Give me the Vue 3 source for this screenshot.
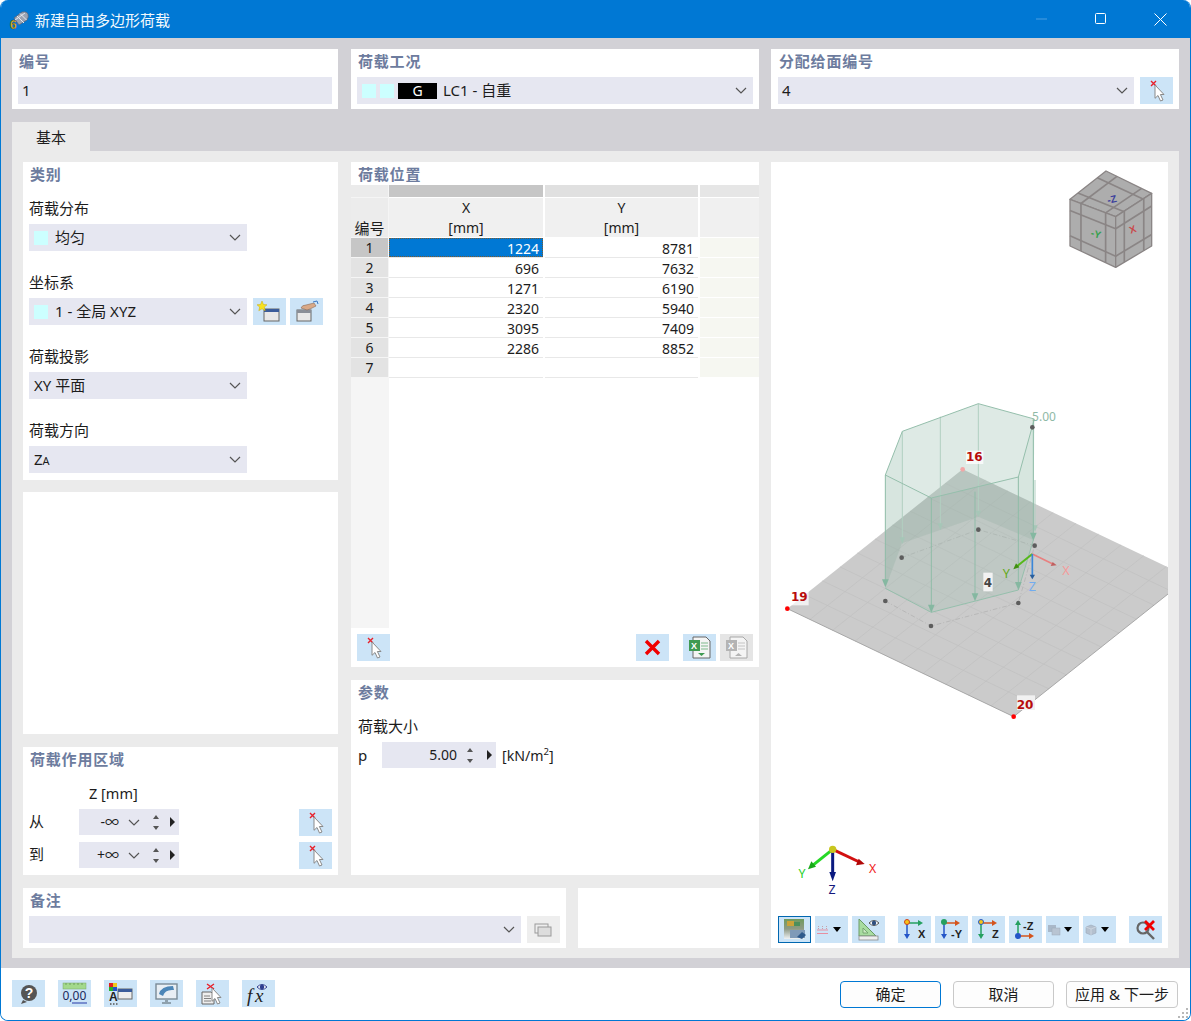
<script setup>
const rows = [
  { no: 1, x: 1224, y: 8781 },
  { no: 2, x: 696, y: 7632 },
  { no: 3, x: 1271, y: 6190 },
  { no: 4, x: 2320, y: 5940 },
  { no: 5, x: 3095, y: 7409 },
  { no: 6, x: 2286, y: 8852 },
  { no: 7, x: '', y: '' }
]

const mix = (a, b, t) => [a[0] + (b[0] - a[0]) * t, a[1] + (b[1] - a[1]) * t]

// grid lines of a quad a-b-c-d, at the given fractions
function quadLines(a, b, c, d, steps) {
  const out = []
  for (const t of steps) {
    out.push([mix(a, b, t), mix(d, c, t)])
    out.push([mix(a, d, t), mix(b, c, t)])
  }
  return out
}

const tenths = [0.1, 0.2, 0.3, 0.4, 0.5, 0.6, 0.7, 0.8, 0.9]
const plateLines = quadLines([578, 268], [52, 686], [731, 1010], [1257, 592], tenths)

const cubeFaces = [
  [[168, 33], [305, 100], [197, 170], [60, 118]],
  [[60, 118], [197, 170], [197, 322], [60, 258]],
  [[197, 170], [305, 100], [305, 258], [197, 322]]
]
const cubeLines = cubeFaces.flatMap((f) => quadLines(f[0], f[1], f[2], f[3], [0.24, 0.78]))
const pts = (f) => f.map((p) => p.join(',')).join(' ')

// load arrows: x, top y, tip y
const rearArrows = [
  [625, 71, 412],
  [397, 154, 492],
  [511, 110, 450],
  [795, 300, 456]
]
const frontArrows = [
  [346, 285, 622],
  [484, 354, 698],
  [745, 291, 630],
  [790, 117, 482],
  [615, 335, 664]
]
const nodes = [[395, 533], [625, 449], [794, 497], [745, 669], [483, 738], [346, 663], [787, 142]]
</script>

<template>
  <div class="window">
    <svg class="defs" width="0" height="0">
      <defs>
        <symbol id="chev" viewBox="0 0 12 7">
          <polyline points="1,1 6,6 11,1" fill="none" stroke="#555" stroke-width="1.2" />
        </symbol>
        <symbol id="pick" viewBox="0 0 33 27">
          <path d="M11 4l5 5M16 4l-5 5" stroke="#e8202a" stroke-width="1.4" />
          <path d="M15 8l9 9.500h-3.600l2.600 5.500-2.500 1-2.500-5.500-3 2.800z" fill="#fff" stroke="#8a8a8a" stroke-width="1" />
        </symbol>
        <linearGradient id="fade" x1="0" y1="0" x2="0" y2="1">
          <stop offset="0" stop-color="#6f9a5c" />
          <stop offset=".5" stop-color="#8f9a86" />
          <stop offset="1" stop-color="#eef2f5" />
        </linearGradient>
      </defs>
    </svg>

    <header class="titlebar">
      <svg class="app-icon" width="22" height="22" viewBox="0 0 22 22">
        <path d="M6 9L14 3q5-1 6 2t-1 6l-8 5z" fill="#9aa3b3" stroke="#5b6272" stroke-width=".7" />
        <path d="M9 7l7 7M12 4.500l6.500 6.500M7 11l10-7" stroke="#e6e8ee" stroke-width="1" />
        <text x="2" y="20" class="six">6</text>
      </svg>
      <span class="title">新建自由多边形荷载</span>
      <div class="win-btns">
        <svg width="12" height="12" viewBox="0 0 12 12" class="win-min"><path d="M0 6h11" stroke="#4d9ee0" /></svg>
        <svg width="12" height="12" viewBox="0 0 12 12"><rect x=".5" y=".5" width="10" height="10" rx="1" fill="none" stroke="#fff" /></svg>
        <svg width="13" height="13" viewBox="0 0 13 13"><path d="M.5.500l12 12M12.500.500l-12 12" stroke="#fff" /></svg>
      </div>
    </header>

    <div class="body">
      <div class="top-row">
        <section class="panel top-no">
          <h3>编号</h3>
          <div class="field">1</div>
        </section>
        <section class="panel top-lc">
          <h3>荷载工况</h3>
          <div class="field">
            <i class="swatch"></i><i class="swatch second"></i><b class="lc-tag">G</b>
            <span>LC1 - 自重</span>
            <svg class="chev"><use href="#chev" /></svg>
          </div>
        </section>
        <section class="panel top-face">
          <h3>分配给面编号</h3>
          <div class="inline">
            <div class="field grow">4<svg class="chev"><use href="#chev" /></svg></div>
            <button class="ib"><svg width="33" height="27"><use href="#pick" /></svg></button>
          </div>
        </section>
      </div>

      <div class="tabs"><div class="tab">基本</div></div>

      <div class="page">
        <div class="page-left">
          <div class="page-cols">
            <div class="col-a">
              <section class="panel cat">
                <h3>类别</h3>
                <div class="group">
                  <label>荷载分布</label>
                  <div class="field w218"><i class="swatch"></i><span class="after-swatch">均匀</span><svg class="chev"><use href="#chev" /></svg></div>
                </div>
                <div class="group">
                  <label>坐标系</label>
                  <div class="inline coord">
                    <div class="field w218"><i class="swatch"></i><span class="after-swatch">1 - 全局 XYZ</span><svg class="chev"><use href="#chev" /></svg></div>
                    <button class="ib first">
                      <svg width="33" height="27" viewBox="0 0 33 27">
                        <rect x="11" y="11" width="15" height="12" fill="#e8e8e8" stroke="#666" />
                        <rect x="11" y="11" width="15" height="3" fill="#3b5c9a" />
                        <path d="M9 3l1.500 3.500 3.500.300-2.700 2.300.900 3.600L9 10.800l-3.200 1.900.900-3.600L4 6.800l3.500-.300z" fill="#f7e21e" stroke="#c9a90a" stroke-width=".5" />
                      </svg>
                    </button>
                    <button class="ib">
                      <svg width="33" height="27" viewBox="0 0 33 27">
                        <rect x="7" y="12" width="14" height="11" fill="#e8e8e8" stroke="#666" />
                        <rect x="7" y="12" width="14" height="3" fill="#8a8f98" />
                        <path d="M11 10q1-3 5-3l8-2 2 3-6 3-3 1z" fill="#d9a987" stroke="#8a6a55" stroke-width=".6" />
                        <path d="M23 4l4-1 1 3" fill="none" stroke="#3b78c4" />
                      </svg>
                    </button>
                  </div>
                </div>
                <div class="group">
                  <label>荷载投影</label>
                  <div class="field w218">XY 平面<svg class="chev"><use href="#chev" /></svg></div>
                </div>
                <div class="group">
                  <label>荷载方向</label>
                  <div class="field w218"><span>Z<small>A</small></span><svg class="chev"><use href="#chev" /></svg></div>
                </div>
              </section>

              <section class="panel empty"></section>

              <section class="panel region">
                <h3>荷载作用区域</h3>
                <div class="z-head">Z [mm]</div>
                <div class="z-row">
                  <span class="z-label">从</span>
                  <div class="spin z-spin">
                    <span class="z-val">-∞</span>
                    <svg class="z-chev"><use href="#chev" /></svg>
                    <span class="updown"><i class="up"></i><i class="down"></i></span>
                    <i class="next"></i>
                  </div>
                  <button class="ib push"><svg width="33" height="27"><use href="#pick" /></svg></button>
                </div>
                <div class="z-row">
                  <span class="z-label">到</span>
                  <div class="spin z-spin">
                    <span class="z-val">+∞</span>
                    <svg class="z-chev"><use href="#chev" /></svg>
                    <span class="updown"><i class="up"></i><i class="down"></i></span>
                    <i class="next"></i>
                  </div>
                  <button class="ib push"><svg width="33" height="27"><use href="#pick" /></svg></button>
                </div>
              </section>
            </div>

            <div class="col-b">
              <section class="panel pos">
                <h3 class="pos-head">荷载位置</h3>
                <div class="grid-area">
                  <div class="grid-row band">
                    <div class="c0"></div><div class="b1"></div><div class="b2"></div><div class="b3"></div>
                  </div>
                  <div class="grid-row head">
                    <div class="c0">编号</div>
                    <div>X<br />[mm]</div>
                    <div>Y<br />[mm]</div>
                    <div></div>
                  </div>
                  <div v-for="r in rows" :key="r.no" class="grid-row data">
                    <div class="c0" :class="{ cur: r.no === 1 }">{{ r.no }}</div>
                    <div class="num" :class="{ sel: r.no === 1 }">{{ r.x }}</div>
                    <div class="num">{{ r.y }}</div>
                    <div class="extra"></div>
                  </div>
                </div>
                <div class="grid-tools">
                  <button class="ib"><svg width="33" height="27"><use href="#pick" /></svg></button>
                  <button class="ib push">
                    <svg width="33" height="27" viewBox="0 0 33 27"><path d="M10 7l13 13M23 7L10 20" stroke="#f00000" stroke-width="3.400" /></svg>
                  </button>
                  <button class="ib gap14">
                    <svg width="33" height="27" viewBox="0 0 33 27">
                      <path d="M10 3h13l4 4v17H10z" fill="#f4f4f4" stroke="#666" />
                      <rect x="6" y="6" width="11" height="11" fill="#3f9a52" />
                      <text x="8" y="15" class="xl">X</text>
                      <path d="M18 9h7M18 12h7M18 15h7" stroke="#7fb98c" />
                      <path d="M15 19h7l-3.500 3z" fill="#3f9a52" />
                    </svg>
                  </button>
                  <button class="ib off">
                    <svg width="33" height="27" viewBox="0 0 33 27">
                      <path d="M10 3h13l4 4v17H10z" fill="#f4f4f4" stroke="#a8a8a8" />
                      <rect x="6" y="6" width="11" height="11" fill="#b4b4b4" />
                      <text x="8" y="15" class="xl">X</text>
                      <path d="M18 9h7M18 12h7M18 15h7" stroke="#c4c4c4" />
                      <path d="M15 22h7l-3.500-3z" fill="#b4b4b4" />
                    </svg>
                  </button>
                </div>
              </section>

              <section class="panel params">
                <h3>参数</h3>
                <label class="p-label">荷载大小</label>
                <div class="p-row">
                  <span class="p-name">p</span>
                  <div class="spin p-spin">
                    <span class="p-val">5.00</span>
                    <span class="updown"><i class="up"></i><i class="down"></i></span>
                    <i class="next"></i>
                  </div>
                  <span class="p-unit">[kN/m<sup>2</sup>]</span>
                </div>
              </section>
            </div>
          </div>

          <div class="notes-row">
            <section class="panel notes">
              <h3>备注</h3>
              <div class="inline">
                <div class="field grow"><svg class="chev"><use href="#chev" /></svg></div>
                <button class="ib soft">
                  <svg width="33" height="27" viewBox="0 0 33 27">
                    <rect x="8" y="8" width="13" height="9" fill="#eee" stroke="#9a9a9a" />
                    <rect x="11" y="11" width="13" height="9" fill="#ddd" stroke="#9a9a9a" />
                  </svg>
                </button>
              </div>
            </section>
            <section class="panel notes-side"></section>
          </div>
        </div>

        <section class="panel view">
          <svg class="scene" width="397" height="786" viewBox="3 -654 1191 2358">
            <!-- plate -->
            <polygon points="578,268 52,686 731,1010 1257,592" fill="#cbcbcb" />
            <line v-for="(l, i) in plateLines" :key="i" :x1="l[0][0]" :y1="l[0][1]" :x2="l[1][0]" :y2="l[1][1]" stroke="#c0c0c0" stroke-width="2" />
            <path d="M52 686L731 1010L1257 592" fill="none" stroke="#9c9c9c" stroke-width="2.500" />
            <path d="M346 663L483 738L745 669L794 497M395 533L625 449L794 497" fill="none" stroke="#adadad" stroke-width="2" stroke-dasharray="14 6 3 6" />

            <!-- load body -->
            <polygon points="397,154 625,71 793,117 745,291 484,354 346,285" fill="#c5dcd2" fill-opacity=".38" />
            <polygon points="346,285 397,154 397,490 346,625" fill="#9cc0b0" fill-opacity=".2" />
            <polygon points="397,154 625,71 625,410 397,490" fill="#9cc0b0" fill-opacity=".14" />
            <polygon points="625,71 793,117 790,480 625,410" fill="#9cc0b0" fill-opacity=".14" />
            <polygon points="346,625 346,452 578,268 790,369 790,480 625,410 395,490" fill="#6e8278" fill-opacity=".11" />
            <polygon points="346,285 484,354 484,697 346,625" fill="#9cc0b0" fill-opacity=".25" />
            <polygon points="484,354 745,291 745,630 484,697" fill="#9cc0b0" fill-opacity=".25" />
            <polygon points="745,291 793,117 790,480 745,630" fill="#9cc0b0" fill-opacity=".3" />
            <g v-for="(a, i) in rearArrows" :key="'r' + i">
              <line :x1="a[0]" :y1="a[1]" :x2="a[0]" :y2="a[2] - 18" stroke="#b1cfc1" stroke-width="3" />
              <polygon :points="`${a[0] - 8},${a[2] - 20} ${a[0] + 8},${a[2] - 20} ${a[0]},${a[2]}`" fill="#a6c6b7" />
            </g>
            <g stroke="#95bfac" stroke-width="3" fill="none">
              <polygon points="397,154 625,71 793,117 745,291 484,354 346,285" />
              <polyline points="346,625 484,697 745,630 790,480" />
            </g>
            <g v-for="(a, i) in frontArrows" :key="'f' + i">
              <line :x1="a[0]" :y1="a[1]" :x2="a[0]" :y2="a[2] - 18" stroke="#8fbca8" stroke-width="3" />
              <polygon :points="`${a[0] - 10},${a[2] - 24} ${a[0] + 10},${a[2] - 24} ${a[0]},${a[2]}`" fill="#85b8a1" />
            </g>

            <circle v-for="(n, i) in nodes" :key="'n' + i" :cx="n[0]" :cy="n[1]" r="7" fill="#5d5d5d" />
            <circle cx="578" cy="268" r="7" fill="#f3a6a6" />
            <circle cx="52" cy="686" r="7" fill="#f00" />
            <circle cx="731" cy="1010" r="7" fill="#f00" />

            <!-- local axes -->
            <path d="M787 522L850 553" stroke="#e88080" stroke-width="5" />
            <polygon points="860,556 842,558 848,546" fill="#c06060" />
            <path d="M787 522L742 558" stroke="#55b81a" stroke-width="6" />
            <polygon points="730,568 748,562 738,550" fill="#3f8f10" />
            <path d="M787 522V586" stroke="#3a86d8" stroke-width="5" />
            <polygon points="787,598 779,584 795,584" fill="#2a5f9c" />
            <text x="888" y="584" class="t-axis" fill="#f59a9a">X</text>
            <text x="709" y="594" class="t-axis" fill="#62a81a">Y</text>
            <text x="787" y="634" class="t-axis" fill="#72acf0">Z</text>

            <text x="822" y="123" class="t-val" fill="#8fb9a6">5.00</text>
            <rect x="588" y="212" width="52" height="40" fill="#fff" fill-opacity=".75" />
            <text x="613" y="244" class="t-no" fill="#b80c0c">16</text>
            <rect x="64" y="634" width="52" height="42" fill="#fff" fill-opacity=".7" />
            <text x="88" y="664" class="t-no" fill="#b80c0c">19</text>
            <rect x="741" y="946" width="54" height="44" fill="#f1f1f1" />
            <text x="765" y="987" class="t-no" fill="#b80c0c">20</text>
            <rect x="640" y="578" width="28" height="56" fill="#f2f2f2" />
            <text x="654" y="622" class="t-no" fill="#444">4</text>

            <!-- orientation cube -->
            <g transform="translate(840 -660)">
              <polygon v-for="(f, i) in cubeFaces" :key="'f' + i" :points="pts(f)" fill="#adadad" stroke="#8a8585" stroke-width="4" stroke-linejoin="round" />
              <line v-for="(l, i) in cubeLines" :key="'c' + i" :x1="l[0][0]" :y1="l[0][1]" :x2="l[1][0]" :y2="l[1][1]" stroke="#8a8585" stroke-width="5" />
              <text x="188" y="128" class="t-cube" fill="#3c3f9c" transform="rotate(-12 188 128)">-Z</text>
              <text x="135" y="232" class="t-cube" fill="#35a04d" transform="rotate(14 135 232)">-Y</text>
              <text x="252" y="218" class="t-cube" fill="#c9474a" transform="rotate(-20 252 218)">X</text>
            </g>

            <!-- global axes -->
            <path d="M188 1408L268 1446" stroke="#d21010" stroke-width="9" />
            <polygon points="284,1452 258,1456 266,1436" fill="#b00808" />
            <path d="M188 1408L128 1456" stroke="#26d826" stroke-width="9" />
            <polygon points="114,1468 124,1444 138,1460" fill="#18a818" />
            <path d="M188 1408V1478" stroke="#0a1a80" stroke-width="9" />
            <polygon points="188,1504 178,1476 198,1476" fill="#0a1a80" />
            <circle cx="188" cy="1408" r="11" fill="#c8c61e" />
            <text x="308" y="1478" class="t-big" fill="#f02020">X</text>
            <text x="96" y="1495" class="t-big" fill="#28d028">Y</text>
            <text x="186" y="1542" class="t-big" fill="#14187c">Z</text>
          </svg>

          <div class="view-tools">
            <button class="ib active">
              <svg width="31" height="25" viewBox="0 0 31 25">
                <rect x="5" y="2" width="20" height="20" fill="url(#fade)" />
                <rect x="8" y="4" width="7" height="5" fill="#c9a23a" />
                <rect x="15" y="5" width="6" height="4" fill="#4c8f5c" />
                <rect x="11" y="13" width="15" height="8" fill="#7f9ab8" />
                <path d="M18 20l5-5 4 3-4 4z" fill="#2f5a8c" />
              </svg>
            </button>
            <button class="ib drop">
              <svg width="20" height="27" viewBox="0 0 20 27">
                <path d="M2 14h11M2 17.500h11" stroke="#e78fa0" />
                <path d="M3.500 10v3M7.500 10v3M11.500 10v3" stroke="#c6a0a8" stroke-dasharray="1 1" />
              </svg>
              <i class="tri"></i>
            </button>
            <button class="ib">
              <svg width="33" height="27" viewBox="0 0 33 27">
                <path d="M7 3v17h17z" fill="#a8dca0" stroke="#6a9a66" />
                <path d="M11 12v5h5z" fill="#cbe9c4" stroke="#6a9a66" stroke-width=".8" />
                <rect x="7" y="20" width="19" height="4" fill="#eee" stroke="#8a8a8a" stroke-width=".8" />
                <path d="M17 7q5-5 10 0q-5 5-10 0z" fill="#fff" stroke="#555" />
                <circle cx="22" cy="7" r="2.200" fill="#2f4f7f" />
              </svg>
            </button>
            <button class="ib gap9">
              <svg width="33" height="27" viewBox="0 0 33 27">
                <path d="M9 7h14" stroke="#25a060" stroke-width="1.500" /><path d="M20 4l5 3-5 3z" fill="#25a060" />
                <path d="M9 7v13" stroke="#2456c8" stroke-width="1.500" /><path d="M6 18l3 5 3-5z" fill="#2456c8" />
                <circle cx="9" cy="6" r="2.500" fill="#f5c518" stroke="#d0401c" />
                <text x="20" y="22" class="t-ax">X</text>
              </svg>
            </button>
            <button class="ib">
              <svg width="33" height="27" viewBox="0 0 33 27">
                <path d="M9 7h14" stroke="#d4541c" stroke-width="1.500" /><path d="M20 4l5 3-5 3z" fill="#d4541c" />
                <path d="M9 7v13" stroke="#2456c8" stroke-width="1.500" /><path d="M6 18l3 5 3-5z" fill="#2456c8" />
                <circle cx="9" cy="6" r="3" fill="#25a060" />
                <text x="16" y="22" class="t-ax">-Y</text>
              </svg>
            </button>
            <button class="ib">
              <svg width="33" height="27" viewBox="0 0 33 27">
                <path d="M9 7h14" stroke="#d4541c" stroke-width="1.500" /><path d="M20 4l5 3-5 3z" fill="#d4541c" />
                <path d="M9 7v13" stroke="#25a060" stroke-width="1.500" /><path d="M6 18l3 5 3-5z" fill="#25a060" />
                <circle cx="9" cy="6" r="2.500" fill="#f5c518" stroke="#2456c8" />
                <text x="20" y="22" class="t-ax">Z</text>
              </svg>
            </button>
            <button class="ib">
              <svg width="33" height="27" viewBox="0 0 33 27">
                <path d="M9 20h14" stroke="#d4541c" stroke-width="1.500" /><path d="M20 17l5 3-5 3z" fill="#d4541c" />
                <path d="M9 20V8" stroke="#25a060" stroke-width="1.500" /><path d="M6 9l3-5 3 5z" fill="#25a060" />
                <circle cx="9" cy="20" r="3" fill="#2456c8" />
                <text x="14" y="14" class="t-ax">-Z</text>
              </svg>
            </button>
            <button class="ib drop">
              <svg width="20" height="27" viewBox="0 0 20 27">
                <rect x="2" y="9" width="8" height="7" fill="#a9b8c9" />
                <rect x="6" y="12" width="8" height="7" fill="#b8c4d2" stroke="#9aa8b8" stroke-width=".5" />
              </svg>
              <i class="tri"></i>
            </button>
            <button class="ib drop">
              <svg width="20" height="27" viewBox="0 0 20 27">
                <path d="M3 11l5-2 5 2v6l-5 2-5-2z" fill="#b4c0ce" stroke="#9aa8b8" stroke-width=".6" />
                <path d="M3 11l5 2 5-2M8 13v6" stroke="#d5dde6" stroke-width=".7" fill="none" />
              </svg>
              <i class="tri"></i>
            </button>
            <button class="ib gap9">
              <svg width="33" height="27" viewBox="0 0 33 27">
                <circle cx="14" cy="12" r="5.500" fill="none" stroke="#666" stroke-width="2.200" />
                <path d="M18 16l7 7" stroke="#666" stroke-width="2.400" />
                <path d="M16 5l9 9M25 5l-9 9" stroke="#f00000" stroke-width="2.800" />
              </svg>
            </button>
          </div>
        </section>
      </div>
    </div>

    <footer class="footer">
      <button class="ib">
        <svg width="33" height="27" viewBox="0 0 33 27">
          <path d="M11 20l-2 4 6-2z" fill="#555" />
          <circle cx="17" cy="13" r="8" fill="#555" />
          <text x="17" y="18" class="t-q">?</text>
        </svg>
      </button>
      <button class="ib">
        <svg width="33" height="27" viewBox="0 0 33 27">
          <rect x="5" y="3" width="23" height="6" fill="#a3d98c" stroke="#7aa868" stroke-width=".5" />
          <path d="M8 3v2M12 3v2M16 3v2M20 3v2M24 3v2" stroke="#5d8a4c" stroke-width=".7" />
          <text x="4.500" y="20" class="t-num">0,00</text>
          <path d="M14 23h15" stroke="#2438a8" stroke-width="1.200" />
        </svg>
      </button>
      <button class="ib">
        <svg width="33" height="27" viewBox="0 0 33 27">
          <rect x="5" y="3" width="4" height="4" fill="#e02020" /><rect x="9" y="3" width="4" height="4" fill="#f2c81a" />
          <rect x="5" y="7" width="4" height="4" fill="#28b028" /><rect x="9" y="7" width="4" height="4" fill="#2850c8" />
          <text x="5" y="21" class="t-a">A</text>
          <path d="M6 24h1.500M9 24h1.500M12 24h1.500" stroke="#555" stroke-width="1.500" />
          <rect x="14" y="9" width="14" height="10" fill="#eee" stroke="#666" />
          <rect x="14" y="9" width="14" height="3" fill="#3b5c9a" />
        </svg>
      </button>
      <button class="ib">
        <svg width="33" height="27" viewBox="0 0 33 27">
          <rect x="6" y="4" width="21" height="15" fill="#e8eef4" stroke="#7a8a96" stroke-width="1.400" />
          <path d="M9 14q2-8 14-8l1 4q-9-1-11 6z" fill="#4c86b8" />
          <path d="M15 21h3M12 23h9" stroke="#7a8a96" stroke-width="1.400" />
        </svg>
      </button>
      <button class="ib">
        <svg width="33" height="27" viewBox="0 0 33 27">
          <path d="M6 12h9l3 3v9H6z" fill="#eee" stroke="#666" />
          <path d="M8 16h6M8 18.500h7M8 21h7" stroke="#666" stroke-width=".8" />
          <path d="M11 4l7 5M18 4l-7 5" stroke="#e8202a" stroke-width="1.400" />
          <path d="M16 8l9 9.500h-3.600l2.600 5.500-2.500 1-2.500-5.500-3 2.800z" fill="#fff" stroke="#8a8a8a" />
        </svg>
      </button>
      <button class="ib">
        <svg width="33" height="27" viewBox="0 0 33 27">
          <text x="5" y="22" class="t-f">f</text>
          <text x="13" y="22" class="t-f">x</text>
          <path d="M15 7q5-5 10 0q-5 5-10 0z" fill="#fff" stroke="#2f3f8f" />
          <circle cx="20" cy="7" r="2.300" fill="#2f3f8f" />
        </svg>
      </button>

      <div class="actions">
        <button class="act primary">确定</button>
        <button class="act">取消</button>
        <button class="act wide">应用 &amp; 下一步</button>
      </div>
      <svg class="grip" width="12" height="12" viewBox="0 0 12 12">
        <path d="M9 1h2v2H9zM5 5h2v2H5zM9 5h2v2H9zM1 9h2v2H1zM5 9h2v2H5zM9 9h2v2H9z" fill="#b8b8b8" />
      </svg>
    </footer>
  </div>
</template>

<style scoped>
.window {
  position: relative;
  box-sizing: border-box;
  width: 1191px;
  height: 1021px;
  display: flex;
  flex-direction: column;
  border: 1px solid #0078d4;
  border-top: 0;
  border-radius: 8px;
  overflow: hidden;
  background: #fff;
  color: #1c1c1c;
  font-family: "Noto Sans", "Noto Sans CJK SC", sans-serif;
  font-size: 15px;
}
.defs {
  position: absolute;
}
button {
  font: inherit;
  color: inherit;
  padding: 0;
  border: 0;
}
.titlebar {
  flex: none;
  height: 38px;
  margin: 0 -1px;
  display: flex;
  align-items: center;
  background: #0078d4;
  color: #fff;
}
.app-icon {
  margin-left: 8px;
  margin-top: 1px;
}
.six {
  font: bold 12px "Liberation Sans", sans-serif;
  fill: #e8c020;
  stroke: #3a3a3a;
  stroke-width: 0.4px;
}
.title {
  margin-left: 5px;
  font-size: 15px;
  color: #f2f8fd;
}
.win-btns {
  margin-left: auto;
  display: flex;
  align-items: center;
  gap: 47px;
  padding-right: 24px;
  box-sizing: border-box;
}
.body {
  flex: 1;
  min-height: 0;
  background: #d2d1d6;
  padding: 11px 11px 10px 11px;
  display: flex;
  flex-direction: column;
}
.panel {
  background: #fff;
  box-sizing: border-box;
  padding: 0 6px;
}
h3 {
  margin: 0 0 4px;
  padding-left: 1px;
  height: 24px;
  line-height: 24px;
  font-size: 15px;
  font-weight: 700;
  letter-spacing: 0.8px;
  color: #6d7c9e;
}
.top-row {
  display: flex;
  height: 60px;
  gap: 13px;
}
.top-no {
  width: 326px;
}
.top-lc {
  width: 408px;
}
.top-face {
  width: 408px;
  margin-left: -1px;
  padding-left: 7px;
}
.field {
  position: relative;
  box-sizing: border-box;
  height: 27px;
  display: flex;
  align-items: center;
  padding-left: 4px;
  background: #e6e7f1;
  line-height: 27px;
  white-space: nowrap;
}
.grow {
  flex: 1;
}
.w218 {
  width: 218px;
  flex: none;
  padding-left: 5px;
}
.w218 .swatch {
  margin-left: 0;
}
.chev {
  position: absolute;
  right: 6px;
  top: 10px;
  width: 12px;
  height: 7px;
}
.swatch {
  flex: none;
  width: 14px;
  height: 14px;
  margin-left: 1px;
  background: #ccffff;
}
.second {
  margin-left: 4px;
}
.after-swatch {
  margin-left: 7px;
}
.lc-tag {
  width: 39px;
  height: 16px;
  margin: 0 6px 0 4px;
  background: #000;
  color: #fff;
  font-weight: 400;
  font-size: 14px;
  line-height: 16px;
  text-align: center;
}
small {
  font-size: 11px;
}
.inline {
  display: flex;
  gap: 6px;
}
.ib {
  flex: none;
  width: 33px;
  height: 27px;
  display: block;
  background: #cce4f7;
}
.ib svg {
  display: block;
}
.tabs {
  margin-top: 13px;
  height: 29px;
}
.tab {
  width: 78px;
  height: 29px;
  line-height: 31px;
  text-align: center;
  background: #ebebeb;
}
.page {
  flex: 1;
  min-height: 0;
  display: flex;
  gap: 12px;
  padding: 11px 11px 10px;
  background: #ebebeb;
}
.page-left {
  width: 736px;
  display: flex;
  flex-direction: column;
  gap: 13px;
}
.page-cols {
  flex: 1;
  display: flex;
  gap: 13px;
}
.col-a {
  width: 315px;
  display: flex;
  flex-direction: column;
}
.col-b {
  width: 408px;
  display: flex;
  flex-direction: column;
  gap: 13px;
}
.cat {
  height: 318px;
}
.cat h3 {
  margin-bottom: 12px;
}
.group {
  margin-bottom: 21px;
}
label {
  display: block;
  height: 20px;
  line-height: 20px;
  margin-bottom: 6px;
}
.coord {
  gap: 4px;
}
.coord .w218 {
  margin-right: 2px;
}
.empty {
  height: 242px;
  margin-top: 12px;
}
.region {
  height: 128px;
  margin-top: 13px;
}
.region h3 {
  margin-bottom: 12px;
}
.z-head {
  margin-left: 60px;
  height: 20px;
  line-height: 20px;
  margin-bottom: 6px;
  font-size: 14.500px;
}
.z-row {
  display: flex;
  height: 27px;
  margin-bottom: 6px;
}
.z-label {
  width: 50px;
  line-height: 25px;
}
.spin {
  position: relative;
  box-sizing: border-box;
  height: 26px;
  background: #e6e7f1;
  line-height: 26px;
  font-size: 14px;
}
.z-spin {
  width: 100px;
}
.z-val {
  position: absolute;
  right: 60px;
}
.z-chev {
  position: absolute;
  left: 49px;
  top: 10px;
  width: 12px;
  height: 7px;
}
.updown {
  position: absolute;
  right: 19px;
  top: 6px;
  width: 7px;
  height: 15px;
}
.up,
.down {
  position: absolute;
  left: 0;
  border-left: 3px solid transparent;
  border-right: 3px solid transparent;
}
.up {
  top: 0;
  border-bottom: 4px solid #555;
}
.down {
  bottom: 0;
  border-top: 4px solid #555;
}
.next {
  position: absolute;
  right: 4px;
  top: 8px;
  border-top: 5px solid transparent;
  border-bottom: 5px solid transparent;
  border-left: 5px solid #222;
}
.push {
  margin-left: auto;
}
.pos {
  height: 505px;
  padding: 0;
  display: flex;
  flex-direction: column;
}
.pos-head {
  flex: none;
  height: 23px;
  margin: 0;
  padding-left: 7px;
}
.grid-area {
  height: 443px;
  flex: none;
  background: linear-gradient(to right, #f5f5f5 38px, #fff 38px);
  font-size: 14px;
}
.grid-row {
  display: grid;
  grid-template-columns: 38px 156px 155px 59px;
}
.band {
  height: 13px;
}
.band > div {
  height: 12px;
  margin-right: 2px;
}
.band .c0 {
  background: #ebebeb;
  margin-right: 1px;
}
.band .b1 {
  background: #c6c6c6;
}
.band .b2 {
  background: #e0e0e0;
}
.band .b3 {
  background: #e6e6e6;
  margin-right: 0;
}
.head {
  height: 40px;
}
.head > div {
  box-sizing: border-box;
  margin-right: 2px;
  height: 39px;
  background: #f0f0f0;
  text-align: center;
  line-height: 20px;
}
.head > div:last-child {
  margin-right: 0;
}
.head .c0 {
  margin-right: 1px;
  padding-top: 20px;
  background: #ececec;
  font-size: 15px;
  white-space: nowrap;
}
.data {
  height: 20px;
}
.data > div {
  height: 19px;
  line-height: 21px;
  margin-right: 2px;
  margin-bottom: 1px;
  box-sizing: border-box;
}
.data .c0 {
  margin-right: 1px;
  background: #e3e3e3;
  text-align: center;
  line-height: 19px;
}
.data .cur {
  background: #c6c6c6;
}
.data .num {
  text-align: right;
  padding-right: 4px;
  box-shadow: 0 1px 0 #e8e8e8;
}
.data .sel {
  background: #0078d4;
  color: #fff;
  outline: 1px dotted #7a5a30;
  outline-offset: -1px;
}
.data .extra {
  margin-right: 0;
  background: #f6f7f1;
}
.grid-tools {
  display: flex;
  padding: 6px 6px 0;
}
.gap14 {
  margin-left: 14px;
}
.off {
  margin-left: 4px;
  background: #e5e5e5;
}
.soft {
  background: #eeeeee;
}
.params {
  flex: 1;
  padding-left: 7px;
}
.params h3 {
  margin-bottom: 12px;
  padding-left: 0;
}
.p-label {
  margin-bottom: 6px;
}
.p-row {
  display: flex;
  align-items: center;
  height: 26px;
}
.p-name {
  width: 24px;
}
.p-spin {
  width: 114px;
}
.p-val {
  position: absolute;
  right: 39px;
}
.p-spin .updown {
  right: 22px;
}
.p-unit {
  margin-left: 6px;
  font-size: 14.200px;
}
sup {
  font-size: 9.500px;
  line-height: 0;
}
.notes-row {
  display: flex;
  height: 60px;
  gap: 12px;
}
.notes {
  width: 543px;
}
.notes-side {
  flex: 1;
}
.view {
  position: relative;
  width: 397px;
  padding: 0 6px 5px 7px;
  display: flex;
  flex-direction: column;
  justify-content: flex-end;
}
.scene {
  position: absolute;
  left: 0;
  top: 0;
  font-family: "Noto Sans", sans-serif;
}
.t-axis {
  font-size: 38px;
  text-anchor: middle;
}
.t-val {
  font-size: 36px;
  text-anchor: middle;
}
.t-no {
  font: bold 36px "DejaVu Sans", sans-serif;
  text-anchor: middle;
}
.t-cube {
  font: bold 30px "Liberation Sans", sans-serif;
  text-anchor: middle;
}
.t-big {
  font-size: 37px;
  text-anchor: middle;
}
.view-tools {
  position: relative;
  display: flex;
  gap: 4px;
}
.active {
  width: 33px;
  box-sizing: border-box;
  border: 1px solid #0067b0;
}
.drop {
  position: relative;
}
.tri {
  position: absolute;
  right: 7px;
  top: 11px;
  border-left: 4px solid transparent;
  border-right: 4px solid transparent;
  border-top: 5px solid #000;
}
.gap9 {
  margin-left: 9px;
}
.t-ax {
  font: bold 11px "Liberation Sans", sans-serif;
  fill: #222;
}
.t-q {
  font: bold 14px "Liberation Sans", sans-serif;
  fill: #fff;
  text-anchor: middle;
}
.t-num {
  font: 12px "Noto Sans", sans-serif;
  fill: #1c2a5c;
}
.t-a {
  font: bold 12px "Liberation Sans", sans-serif;
  fill: #222;
}
.t-f {
  font: italic 19px "Liberation Serif", serif;
  fill: #222;
}
.xl {
  font: bold 9px "Liberation Sans", sans-serif;
  fill: #fff;
}
.footer {
  position: relative;
  flex: none;
  height: 52px;
  box-sizing: border-box;
  padding: 12px 12px 0 11px;
  display: flex;
  gap: 13px;
  background: #fff;
}
.actions {
  margin-left: auto;
  margin-top: 1px;
  display: flex;
  gap: 12px;
}
.act {
  box-sizing: border-box;
  width: 101px;
  height: 27px;
  border: 1px solid #c9c9c9;
  border-radius: 4px;
  background: #fdfdfd;
  line-height: 25px;
}
.primary {
  border-color: #0078d4;
}
.wide {
  width: 112px;
}
.grip {
  position: absolute;
  right: 1px;
  bottom: 1px;
}
</style>

<style>
html,
body {
  background: #fff;
}
</style>
